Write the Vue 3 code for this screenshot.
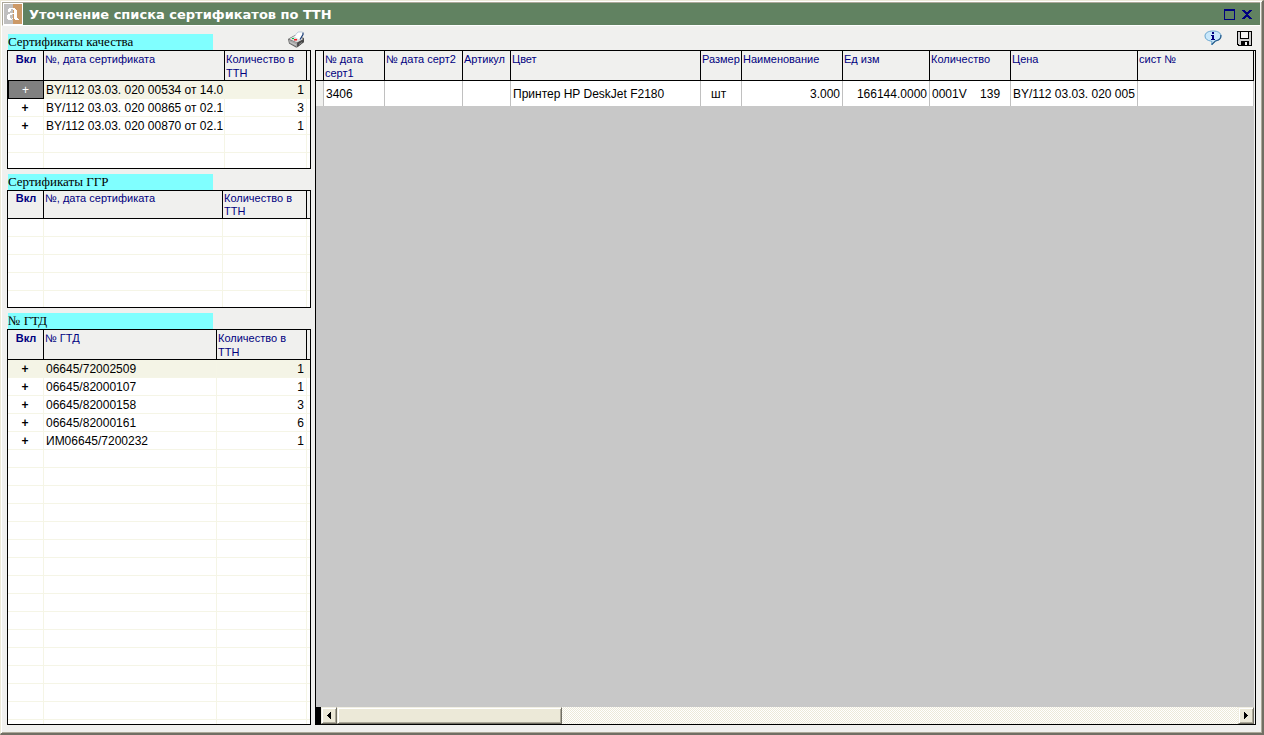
<script setup>
import { ref } from 'vue'

const quality = ref([
  { mark: '+', name: 'BY/112 03.03. 020 00534 от 14.0', qty: 1 },
  { mark: '+', name: 'BY/112 03.03. 020 00865 от 02.1', qty: 3 },
  { mark: '+', name: 'BY/112 03.03. 020 00870 от 02.1', qty: 1 },
])
const declarations = ref([
  { mark: '+', name: '06645/72002509', qty: 1 },
  { mark: '+', name: '06645/82000107', qty: 1 },
  { mark: '+', name: '06645/82000158', qty: 3 },
  { mark: '+', name: '06645/82000161', qty: 6 },
  { mark: '+', name: 'ИМ06645/7200232', qty: 1 },
])
const panels = [
  { id: 'quality', title: 'Сертификаты качества', head: '№, дата сертификата', rows: quality.value, blank: 3, selected: true },
  { id: 'ggr', title: 'Сертификаты ГГР', head: '№, дата сертификата', rows: [], blank: 6 },
  { id: 'gtd', title: '№ ГТД', head: '№ ГТД', rows: declarations.value, blank: 60 },
]
const columns = [
  { key: 'c1', title: '№ дата серт1', value: '3406' },
  { key: 'c2', title: '№ дата серт2', value: '' },
  { key: 'c3', title: 'Артикул', value: '' },
  { key: 'c4', title: 'Цвет', value: 'Принтер HP DeskJet F2180' },
  { key: 'c5', title: 'Размер', value: 'шт', align: 'indent' },
  { key: 'c6', title: 'Наименование', value: '3.000', align: 'num' },
  { key: 'c7', title: 'Ед изм', value: '166144.0000', align: 'num' },
  { key: 'c8', title: 'Количество', value: '0001V\u00a0\u00a0\u00a0 139' },
  { key: 'c9', title: 'Цена', value: 'BY/112 03.03. 020 005' },
  { key: 'c10', title: 'сист №', value: '' },
]
</script>

<template>
  <div class="window">
    <header class="titlebar">
      <svg class="logo" viewBox="0 0 20 22" shape-rendering="crispEdges" aria-hidden="true">
        <rect width="20" height="22" fill="#fff" />
        <rect x="1" y="1" width="9" height="20" fill="#c0c0c0" />
        <rect x="10" y="1" width="9" height="20" fill="#cc9966" />
        <path
          d="M6 5h6v1h1v1h1v8h1v1h1v1h-4v-1h-1v-1h-1v1h-1v1H5v-1H4v-4h1v-1h2v-1h4V7h-1V6H8v2H7v1H5V6h1zM11 11H9v1H7v3h1v1h1v-1h2z"
          fill="#fff"
          fill-rule="evenodd"
        />
      </svg>
      <h1>Уточнение списка сертификатов по ТТН</h1>
      <button type="button" class="caption-btn" aria-label="Развернуть">
        <svg width="11" height="11" viewBox="0 0 11 11" shape-rendering="crispEdges">
          <path d="M0 0h11v11H0zM1 2v8h9V2z" fill="#000080" fill-rule="evenodd" />
        </svg>
      </button>
      <button type="button" class="caption-btn" aria-label="Закрыть">
        <svg width="10" height="9" viewBox="0 0 10 9" shape-rendering="crispEdges">
          <path d="M0 0h3v1h1v1h2V1h1V0h3v1H9v1H8v1H7v1H6v1h1v1h1v1h1v1h1v1H7V8H6V7H4v1H3v1H0V8h1V7h1V6h1V5h1V4H3V3H2V2H1V1H0z" fill="#000080" />
        </svg>
      </button>
    </header>

    <main class="body">
      <aside class="left">
        <section v-for="p in panels" :key="p.id" class="panel" :class="p.id">
          <div class="panel-head">
            <h2>{{ p.title }}</h2>
            <button v-if="p.id === 'quality'" type="button" class="tool print" aria-label="Печать">
              <svg width="17" height="17" viewBox="0 0 17 17" aria-hidden="true">
                <path d="M0 8l7-4 9 3v4l-7 5.500H8l-7-4z" fill="#5a5a5a" />
                <path d="M1 8l6-3.500L15.500 8 9 11.500z" fill="#dcdcdc" />
                <path d="M0.500 8.500L9 11.500v4.500l-7.500-4z" fill="#a4a4a4" />
                <path d="M2 10.500l6 2.800v1.200l-6-3z" fill="#c4c4c4" />
                <path d="M9.500 11.800L16 8v3l-6.500 5z" fill="#484848" />
                <path d="M11 13l3-2v1l-3 2z" fill="#909090" />
                <path d="M6.500 5.500L10 1h5l-2 7-2 .5z" fill="#fff" />
                <path d="M6.500 5L10 1h4.500" fill="none" stroke="#a8bcd0" stroke-width=".7" />
                <path d="M15 1.500v2L12 8.500" fill="none" stroke="#1c3f78" stroke-width="1.200" />
                <path d="M4 7h2v1H4z" fill="#00c040" />
                <path d="M6 8h3v1.500H6z" fill="#f02020" />
              </svg>
            </button>
          </div>
          <div class="grid-box">
            <table class="grid">
              <colgroup>
                <col class="w-mark" /><col /><col class="w-qty" /><col class="w-edge" />
              </colgroup>
              <thead>
                <tr><th class="mark" scope="col">Вкл</th><th scope="col">{{ p.head }}</th><th scope="col">Количество в ТТН</th><td></td></tr>
              </thead>
              <tbody>
                <tr v-for="(r, i) in p.rows" :key="r.name" :class="{ current: i === 0 }">
                  <td class="mark" :class="{ selected: p.selected && i === 0 }">{{ r.mark }}</td>
                  <td>{{ r.name }}</td>
                  <td class="num">{{ r.qty }}</td>
                  <td></td>
                </tr>
                <tr v-for="n in p.blank" :key="n"><td></td><td></td><td></td><td></td></tr>
              </tbody>
            </table>
          </div>
        </section>
      </aside>

      <section class="right">
        <div class="toolbar">
          <button type="button" class="tool" aria-label="Информация">
            <svg width="18" height="16" viewBox="0 0 18 16" aria-hidden="true">
              <path d="M9 1C4 1 1 3 1 6s2.500 4.500 5.500 5l1.500.500L7.500 15l4-4c3.500-.5 5.500-2.300 5.500-5 0-3-3-5-8-5z" fill="#c9e8fb" stroke="#6aa6d0" />
              <path d="M16.800 5c.5 3.500-2 5.500-5.500 6L7.800 14.500" fill="none" stroke="#2b5f8c" stroke-width="1.200" />
              <path d="M8 2h2v2H8zM7 5h3v4h1v1H7V9h1V6H7z" fill="#000080" shape-rendering="crispEdges" />
            </svg>
          </button>
          <button type="button" class="tool" aria-label="Сохранить">
            <svg width="15" height="15" viewBox="0 0 15 15" shape-rendering="crispEdges" aria-hidden="true">
              <path d="M0 0h15v15H1v-1H0z" fill="#000" />
              <path d="M1 1h2v7h9V1h2v13h-2v-4H4v4H2v-1H1z" fill="#d0d0d0" />
              <path d="M4 1h7v6H4zM8 11h2v3H8z" fill="#f4f4f4" />
            </svg>
          </button>
        </div>
        <div class="items">
          <div class="items-view">
            <table>
              <colgroup>
                <col class="k0" /><col v-for="c in columns" :key="c.key" :class="c.key" />
              </colgroup>
              <thead>
                <tr><td></td><th v-for="c in columns" :key="c.key" scope="col">{{ c.title }}</th></tr>
              </thead>
              <tbody>
                <tr><td class="gutter"></td><td v-for="c in columns" :key="c.key" :class="c.align">{{ c.value }}</td></tr>
              </tbody>
            </table>
          </div>
          <div class="hscroll">
            <button type="button" aria-label="Влево"><svg width="4" height="7" viewBox="0 0 4 7" shape-rendering="crispEdges"><path d="M4 0v7H3V6H2V5H1V4H0V3h1V2h1V1h1V0z" /></svg></button>
            <div class="track"><div class="thumb"></div></div>
            <button type="button" aria-label="Вправо"><svg width="4" height="7" viewBox="0 0 4 7" shape-rendering="crispEdges"><path d="M0 0v7h1V6h1V5h1V4h1V3H3V2H2V1H1V0z" /></svg></button>
          </div>
        </div>
      </section>
    </main>
  </div>
</template>

<style>
body {
  background: #f0f0ee;
}
</style>

<style scoped>
* {
  box-sizing: border-box;
}
.window {
  display: flex;
  flex-direction: column;
  height: 100vh;
  padding: 1px 1px 0 1px;
  background: #f0f0ee;
  border: 1px solid #ece9d8;
  border-right: 2px solid #716f64;
  border-bottom: 2px solid #716f64;
  box-shadow: inset 1px 1px #fff, inset -1px -1px #aca899;
  font-family: "Liberation Sans", Arial, sans-serif;
  overflow: hidden;
}
.titlebar {
  display: flex;
  align-items: center;
  height: 24px;
  margin-right: 1px;
  padding-right: 6px;
  gap: 4px;
  background: #618261;
  border-left: 1px solid #aca899;
  border-top: 1px solid #aca899;
  border-bottom: 1px solid #fff;
}
.logo {
  width: 20px;
  height: 22px;
  flex: none;
}
h1 {
  flex: 1;
  margin: 0 0 0 2px;
  padding-top: 1px;
  color: #fff;
  font: 700 13px/20px "DejaVu Sans", Verdana, sans-serif;
  white-space: nowrap;
}
button {
  display: flex;
  align-items: center;
  justify-content: center;
  margin: 0;
  padding: 0;
  border: 0;
  background: none;
  color: #000;
  flex: none;
}
.caption-btn {
  width: 14px;
  height: 14px;
}
.body {
  flex: 1;
  display: flex;
  gap: 4px;
  min-height: 0;
  padding: 8px 5px 8px 5px;
}
.left {
  display: flex;
  flex-direction: column;
  gap: 5px;
  width: 304px;
  flex: none;
}
.panel {
  display: flex;
  flex-direction: column;
  flex: none;
}
.gtd {
  flex: 1;
  min-height: 0;
}
.panel-head {
  display: flex;
  justify-content: space-between;
  align-items: flex-end;
  height: 16px;
  padding: 0 6px 0 1px;
}
h2 {
  width: 205px;
  height: 16px;
  margin: 0;
  background: #80ffff;
  color: #000;
  font: 13px/16px "Liberation Serif", "Times New Roman", serif;
}
.tool {
  width: 18px;
  height: 18px;
}
.print {
  margin-bottom: 2px;
}
.grid-box {
  border: 1px solid #000;
  background: #fff;
  height: 119px;
  overflow: hidden;
}
.ggr .grid-box {
  height: 118px;
}
.gtd .grid-box {
  flex: 1;
  height: auto;
}
table {
  width: 100%;
  table-layout: fixed;
  border-collapse: separate;
  border-spacing: 0;
}
th,
td {
  padding: 0;
  overflow: hidden;
  white-space: nowrap;
}
th {
  height: 30px;
  padding: 1px 0 0 1px;
  border-right: 1px solid #000;
  border-bottom: 1px solid #000;
  background: #f0f0ee;
  color: #000080;
  font-size: 11px;
  font-weight: 400;
  line-height: 14px;
  text-align: left;
  vertical-align: top;
  white-space: normal;
}
thead td {
  background: #f0f0ee;
  border-bottom: 1px solid #000;
}
.ggr th {
  height: 28px;
  line-height: 13px;
}
th.mark {
  font-weight: 700;
}
.w-mark {
  width: 36px;
}
.w-qty {
  width: 82px;
}
.ggr .w-qty {
  width: 84px;
}
.gtd .w-qty {
  width: 90px;
}
.w-edge {
  width: 3px;
}
.grid tbody td {
  height: 18px;
  padding: 1px 0 0 2px;
  border-right: 1px solid #f5f5e6;
  border-bottom: 1px solid #f5f5e6;
  font-size: 12px;
  line-height: 16px;
}
.grid tbody td:last-child {
  border-right: 0;
}
.grid .current td {
  background: #f4f4e6;
}
.grid tbody td.num {
  padding-right: 2px;
  text-align: right;
}
.mark {
  text-align: center;
}
.grid tbody td.mark {
  padding: 1px 1px 0 0;
  font-weight: 700;
}
.grid .current td.selected {
  background: #808080;
  border: 1px solid #000;
  border-top: 0;
  color: #fff;
  font-weight: 400;
}
.right {
  flex: 1;
  display: flex;
  flex-direction: column;
  min-width: 0;
}
.toolbar {
  display: flex;
  justify-content: flex-end;
  gap: 13px;
  height: 16px;
  padding-right: 3px;
  align-items: center;
}
.toolbar .tool {
  margin-bottom: 8px;
}
.items {
  flex: 1;
  display: flex;
  flex-direction: column;
  min-height: 0;
  border: 1px solid #000;
}
.items-view {
  flex: 1;
  background: #c8c8c8;
  border-right: 1px solid #f0f0ee;
  overflow: hidden;
}
.items tbody td {
  height: 25px;
  padding: 0 2px;
  border-right: 1px solid #c0c0c0;
  background: #fff;
  font-size: 12px;
}
.items tbody td.gutter {
  background: #f0f0ee;
}
.items thead td {
  border-right: 1px solid #000;
}
.items tbody td.indent {
  padding-left: 10px;
}
.items td.num {
  text-align: right;
}
.k0 { width: 8px; }
.c1 { width: 61px; }
.c2 { width: 78px; }
.c3 { width: 48px; }
.c4 { width: 190px; }
.c5 { width: 41px; }
.c6 { width: 101px; }
.c7 { width: 87px; }
.c8 { width: 81px; }
.c9 { width: 127px; }
.hscroll {
  display: flex;
  height: 17px;
  padding-left: 5px;
  background: #000;
  border-right: 1px solid #f0f0ee;
}
.hscroll button,
.thumb {
  width: 16px;
  height: 17px;
  background: #ece9d8;
  border: 1px solid;
  border-color: #f1efe2 #716f64 #716f64 #f1efe2;
  box-shadow: inset 1px 1px #fff, inset -1px -1px #aca899;
}
.track {
  flex: 1;
  background: repeating-conic-gradient(#fff 0 25%, #ece9d8 0 50%) 0 0 / 2px 2px;
}
.hscroll .thumb {
  width: 25%;
}
</style>
